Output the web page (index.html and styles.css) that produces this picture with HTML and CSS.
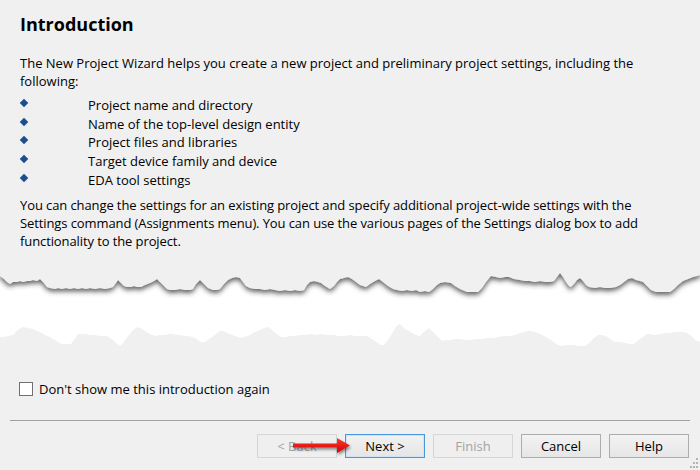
FILE: index.html
```html
<!DOCTYPE html>
<html>
<head>
<meta charset="utf-8">
<link rel="stylesheet" href="styles.css">
</head>
<body>
<div class="page">
  <div class="content">
    <h1 class="title">Introduction</h1>
    <p class="intro">The New Project Wizard helps you create a new project and preliminary project settings, including the following:</p>
    <ul class="items">
      <li><span class="bullet"></span>Project name and directory</li>
      <li><span class="bullet"></span>Name of the top-level design entity</li>
      <li><span class="bullet"></span>Project files and libraries</li>
      <li><span class="bullet"></span>Target device family and device</li>
      <li><span class="bullet"></span>EDA tool settings</li>
    </ul>
    <p class="note">You can change the settings for an existing project and specify additional project-wide settings with the Settings command (Assignments menu). You can use the various pages of the Settings dialog box to add functionality to the project.</p>
  </div>

  <svg class="torn" viewBox="0 268 700 84" width="700" height="84" aria-hidden="true">
    <defs>
      <filter id="tornShadow" x="-5%" y="-50%" width="110%" height="200%">
        <feDropShadow dx="0" dy="3" stdDeviation="2.6" flood-color="#333" flood-opacity="0.75"/>
      </filter>
    </defs>
    <rect x="0" y="268" width="700" height="84" fill="#ffffff"/>
    <polygon fill="#f0f0f0" filter="url(#tornShadow)" points="0,262 0,277 4,280 7,283 10,285 13,283 17,283 20,282 23,283 27,282 30,282 33,281 37,282 40,280 43,283 47,288 50,289 55,290 58,289 62,290 66,289 70,290 74,289 78,290 82,289 86,290 90,289 95,290 100,289 105,290 110,289 113,288 116,284 118,281 121,284 124,287 127,288 131,288 134,287 137,288 141,288 145,286 150,284 154,282 157,280 160,283 164,287 167,290 170,291 175,291 180,290 185,291 190,291 193,290 196,285 200,281 204,285 208,289 213,291 217,291 220,290 224,285 228,281 232,279 236,278 240,279 243,283 246,287 250,289 255,290 260,290 265,291 270,290 275,291 280,292 285,291 290,292 295,291 300,292 304,291 307,286 310,283 314,282 318,283 321,284 325,287 330,290 334,287 337,283 340,280 344,279 348,278 352,280 356,283 360,286 366,288 370,285 375,282 379,280 383,283 388,287 393,290 397,291 402,292 407,291 412,292 416,291 420,293 425,292 429,293 433,290 437,286 440,284 445,283 451,284 455,287 460,290 467,293 472,293 478,293 482,289 486,283 491,277 496,278 500,279 505,278 509,278 514,280 520,281 525,282 530,282 535,283 540,282 545,283 550,283 554,282 557,278 560,274 563,278 566,283 569,287 571,288 574,285 577,281 580,279 583,282 586,286 589,288 595,289 600,288 605,289 610,289 616,288 620,286 624,283 628,280 632,279 636,281 640,282 643,283 647,287 651,291 656,293 662,293 670,293 674,290 678,286 683,282 688,280 693,278 697,277 700,276 700,262"/>
    <polygon fill="#f0f0f0" points="0,338 4,338 8,337 13,336 16,333 18,331 21,329 23,328 28,329 33,330 37,332 40,333 45,336 50,338 53,340 55,341 58,343 62,345 66,345 71,345 73,342 75,340 78,335 82,335 85,335 90,336 95,336 100,337 107,337 110,339 113,341 116,344 120,347 123,344 125,341 129,336 133,331 136,329 138,328 142,330 145,332 148,334 152,336 156,337 160,336 165,336 169,335 173,335 177,336 180,336 184,337 188,337 192,338 195,339 198,341 200,343 205,343 209,340 212,338 216,335 220,332 223,332 227,334 230,335 235,337 241,339 245,338 250,336 255,333 260,331 264,329 268,328 271,330 273,332 277,335 281,338 285,338 290,337 295,337 300,336 305,336 310,335 316,336 321,335 327,336 333,336 339,337 345,337 350,336 355,337 360,337 366,337 369,338 372,340 375,342 378,344 381,346 384,346 387,342 390,338 393,333 396,328 398,326 400,325 403,328 405,330 409,332 412,334 416,336 420,337 423,334 425,332 429,329 432,332 434,334 438,338 442,342 446,341 450,341 455,340 460,340 465,341 470,341 476,340 482,340 488,339 493,339 498,338 504,337 510,337 515,336 520,334 524,333 528,332 531,332 535,333 540,335 544,337 548,339 551,341 555,344 558,346 562,347 567,346 573,346 579,347 585,347 588,345 590,343 594,339 598,336 602,336 605,337 608,338 610,340 613,342 616,343 620,343 625,344 630,345 634,345 637,342 640,340 644,337 647,335 651,335 655,336 660,335 665,334 670,334 675,333 680,333 683,333 687,334 690,336 693,338 695,341 698,342 700,343 700,358 0,358"/>
  </svg>

  <label class="check"><span class="box"></span><span class="check-label">Don't show me this introduction again</span></label>

  <div class="sep"></div>

  <div class="buttons">
    <button class="btn disabled">&lt; Back</button>
    <button class="btn default">Next &gt;</button>
    <button class="btn disabled">Finish</button>
    <button class="btn">Cancel</button>
    <button class="btn">Help</button>
  </div>

  <svg class="arrow" width="70" height="28" viewBox="0 0 70 28" aria-hidden="true">
    <defs>
      <linearGradient id="red" x1="0" y1="0" x2="0" y2="1">
        <stop offset="0" stop-color="#ff3a2a"/>
        <stop offset="1" stop-color="#d40000"/>
      </linearGradient>
      <filter id="arrowShadow" x="-20%" y="-50%" width="140%" height="200%">
        <feDropShadow dx="1" dy="2" stdDeviation="1.6" flood-color="#000" flood-opacity="0.45"/>
      </filter>
    </defs>
    <polygon fill="url(#red)" filter="url(#arrowShadow)" points="3,7.5 47,7.5 47,2 60,9.5 47,17 47,11.5 3,11.5"/>
  </svg>

  <svg class="grip" width="10" height="12" viewBox="0 0 10 12" aria-hidden="true">
    <rect x="7" y="0" width="2" height="2" fill="#b4b4b4"/>
    <rect x="4" y="4" width="2" height="2" fill="#b4b4b4"/>
    <rect x="7" y="4" width="2" height="2" fill="#b4b4b4"/>
    <rect x="1" y="8" width="2" height="2" fill="#b4b4b4"/>
    <rect x="4" y="8" width="2" height="2" fill="#b4b4b4"/>
    <rect x="7" y="8" width="2" height="2" fill="#b4b4b4"/>
  </svg>
</div>
</body>
</html>
```

FILE: styles.css
```css
* { box-sizing: border-box; }

html, body {
  margin: 0;
  padding: 0;
  background: #f0f0f0;
}

body {
  font-family: "Open Sans", "Noto Sans", "Liberation Sans", sans-serif;
  font-size: 13px;
  color: #000;
}

.page {
  position: relative;
  width: 700px;
  height: 470px;
  overflow: hidden;
  background: #f0f0f0;
  display: flex;
  flex-direction: column;
}

.content {
  padding: 12px 20px 0 20px;
}

.title {
  margin: 0;
  font-size: 18px;
  line-height: 24px;
  font-weight: 700;
  color: #000;
}

.intro {
  margin: 18px 0 0 0;
  line-height: 18px;
  width: 640px;
}

.items {
  list-style: none;
  margin: 6px 0 0 0;
  padding: 0;
}

.items li {
  display: flex;
  align-items: flex-start;
  line-height: 18.7px;
  height: 18.7px;
}

.bullet {
  flex: none;
  width: 6px;
  height: 6px;
  margin: 4px 61px 0 1px;
  background: #1d4f8f;
  transform: rotate(45deg);
}

.note {
  margin: 7px 0 0 0;
  line-height: 18px;
  width: 650px;
  letter-spacing: -0.1px;
}

.torn {
  display: block;
  flex: none;
  margin-top: 17px;
}

.check {
  display: flex;
  align-items: center;
  height: 16px;
  margin: 30px 0 0 19px;
}

.box {
  flex: none;
  width: 14px;
  height: 14px;
  border: 1px solid #707070;
  background: #ffffff;
  margin-right: 6px;
}

.check-label {
  line-height: 16px;
}

.sep {
  flex: none;
  height: 1px;
  margin: 23px 10px 0 10px;
  background: #a0a0a0;
}

.buttons {
  display: flex;
  justify-content: flex-end;
  gap: 8px;
  margin-top: 13px;
  padding-right: 11px;
}

.btn {
  width: 80px;
  height: 24px;
  padding: 0;
  font-family: inherit;
  font-size: 13px;
  color: #000;
  border: 1px solid #adadad;
  background: linear-gradient(#f3f3f3, #e6e6e6);
}

.btn.default {
  border-color: #4a96dc;
  box-shadow: inset 0 0 0 1px #cfe4f7;
  background: linear-gradient(#f2f2f2, #e5e5e5);
}

.btn.disabled {
  color: #a3a3a3;
  border-color: #d6d6d6;
  background: #efefef;
}

.arrow {
  position: absolute;
  left: 290px;
  top: 436px;
}

.grip {
  position: absolute;
  right: 1px;
  bottom: 0;
}
```
